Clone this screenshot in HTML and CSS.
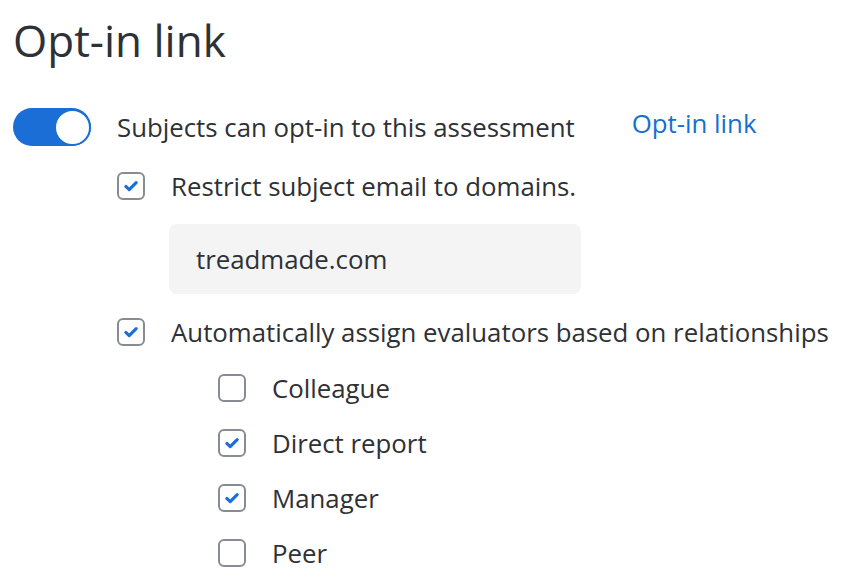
FILE: index.html
```html
<!DOCTYPE html>
<html lang="en">
<head>
  <meta charset="UTF-8">
  <title>Opt-in link</title>
  <link rel="stylesheet" href="styles.css">
</head>
<body>
  <h1 class="titulo">Opt-in link</h1>

  <!-- toggle principal -->
  <div class="linha-toggle">
    <span class="toggle"><span class="bolinha"></span></span>
    <span class="texto">Subjects can opt-in to this assessment</span>
    <a class="link" href="#">Opt-in link</a>
  </div>

  <div class="opcoes">
    <div class="opcao">
      <span class="caixa marcada">
        <svg viewBox="0 0 16 16"><path d="M3.4 8.4 L6.4 11.2 L12.6 5"/></svg>
      </span>
      <span class="texto">Restrict subject email to domains.</span>
    </div>

    <div class="campo">treadmade.com</div>

    <div class="opcao">
      <span class="caixa marcada">
        <svg viewBox="0 0 16 16"><path d="M3.4 8.4 L6.4 11.2 L12.6 5"/></svg>
      </span>
      <span class="texto">Automatically assign evaluators based on relationships</span>
    </div>

    <div class="subopcoes">
      <div class="opcao">
        <span class="caixa"></span>
        <span class="texto">Colleague</span>
      </div>
      <div class="opcao">
        <span class="caixa marcada">
          <svg viewBox="0 0 16 16"><path d="M3.4 8.4 L6.4 11.2 L12.6 5"/></svg>
        </span>
        <span class="texto">Direct report</span>
      </div>
      <div class="opcao">
        <span class="caixa marcada">
          <svg viewBox="0 0 16 16"><path d="M3.4 8.4 L6.4 11.2 L12.6 5"/></svg>
        </span>
        <span class="texto">Manager</span>
      </div>
      <div class="opcao">
        <span class="caixa"></span>
        <span class="texto">Peer</span>
      </div>
    </div>
  </div>
</body>
</html>
```

FILE: styles.css
```css
body {
  margin: 0;
  padding: 0 0 0 13px;
  font-family: "Open Sans", "Noto Sans", sans-serif;
  color: #2e3135;
  background: #fff;
}

.titulo {
  margin: 0;
  padding-top: 10px;
  font-size: 44px;
  font-weight: 400;
  line-height: 60px;
  height: 60px;
}

.linha-toggle {
  display: flex;
  align-items: center;
  margin-top: 38px;
  height: 38px;
}

.toggle {
  width: 78px;
  height: 38px;
  border-radius: 19px;
  background: #1a6ed6;
  display: flex;
  align-items: center;
  justify-content: flex-end;
  box-sizing: border-box;
  flex-shrink: 0;
}

.bolinha {
  width: 37px;
  height: 37px;
  border-radius: 50%;
  background: #fff;
  border: 2px solid #1a6ed6;
  box-sizing: border-box;
}

.texto {
  font-size: 25.8px;
  line-height: 30px;
}

.linha-toggle .texto {
  margin-left: 26px;
}

.link {
  margin-left: 57px;
  font-size: 25.8px;
  color: #1470d1;
  text-decoration: none;
  margin-top: -8px;
}

.opcoes {
  padding-left: 104px;
  margin-top: 25px;
}

.opcao {
  display: flex;
  align-items: center;
  gap: 26px;
  height: 30px;
}

.caixa {
  width: 28px;
  height: 28px;
  border: 2px solid #868b94;
  border-radius: 6px;
  box-sizing: border-box;
  display: flex;
  align-items: center;
  justify-content: center;
  flex-shrink: 0;
}

.caixa svg {
  width: 18px;
  height: 18px;
  fill: none;
  stroke: #1a6ed6;
  stroke-width: 2.8;
  stroke-linecap: round;
  stroke-linejoin: round;
}

.campo {
  margin: 23px 0 23px 52px;
  width: 412px;
  height: 70px;
  background: #f4f4f4;
  border-radius: 8px;
  box-sizing: border-box;
  padding-left: 27px;
  display: flex;
  align-items: center;
  font-size: 25.8px;
}

.subopcoes {
  padding-left: 101px;
  margin-top: 26px;
  display: flex;
  flex-direction: column;
  gap: 25px;
}
```
